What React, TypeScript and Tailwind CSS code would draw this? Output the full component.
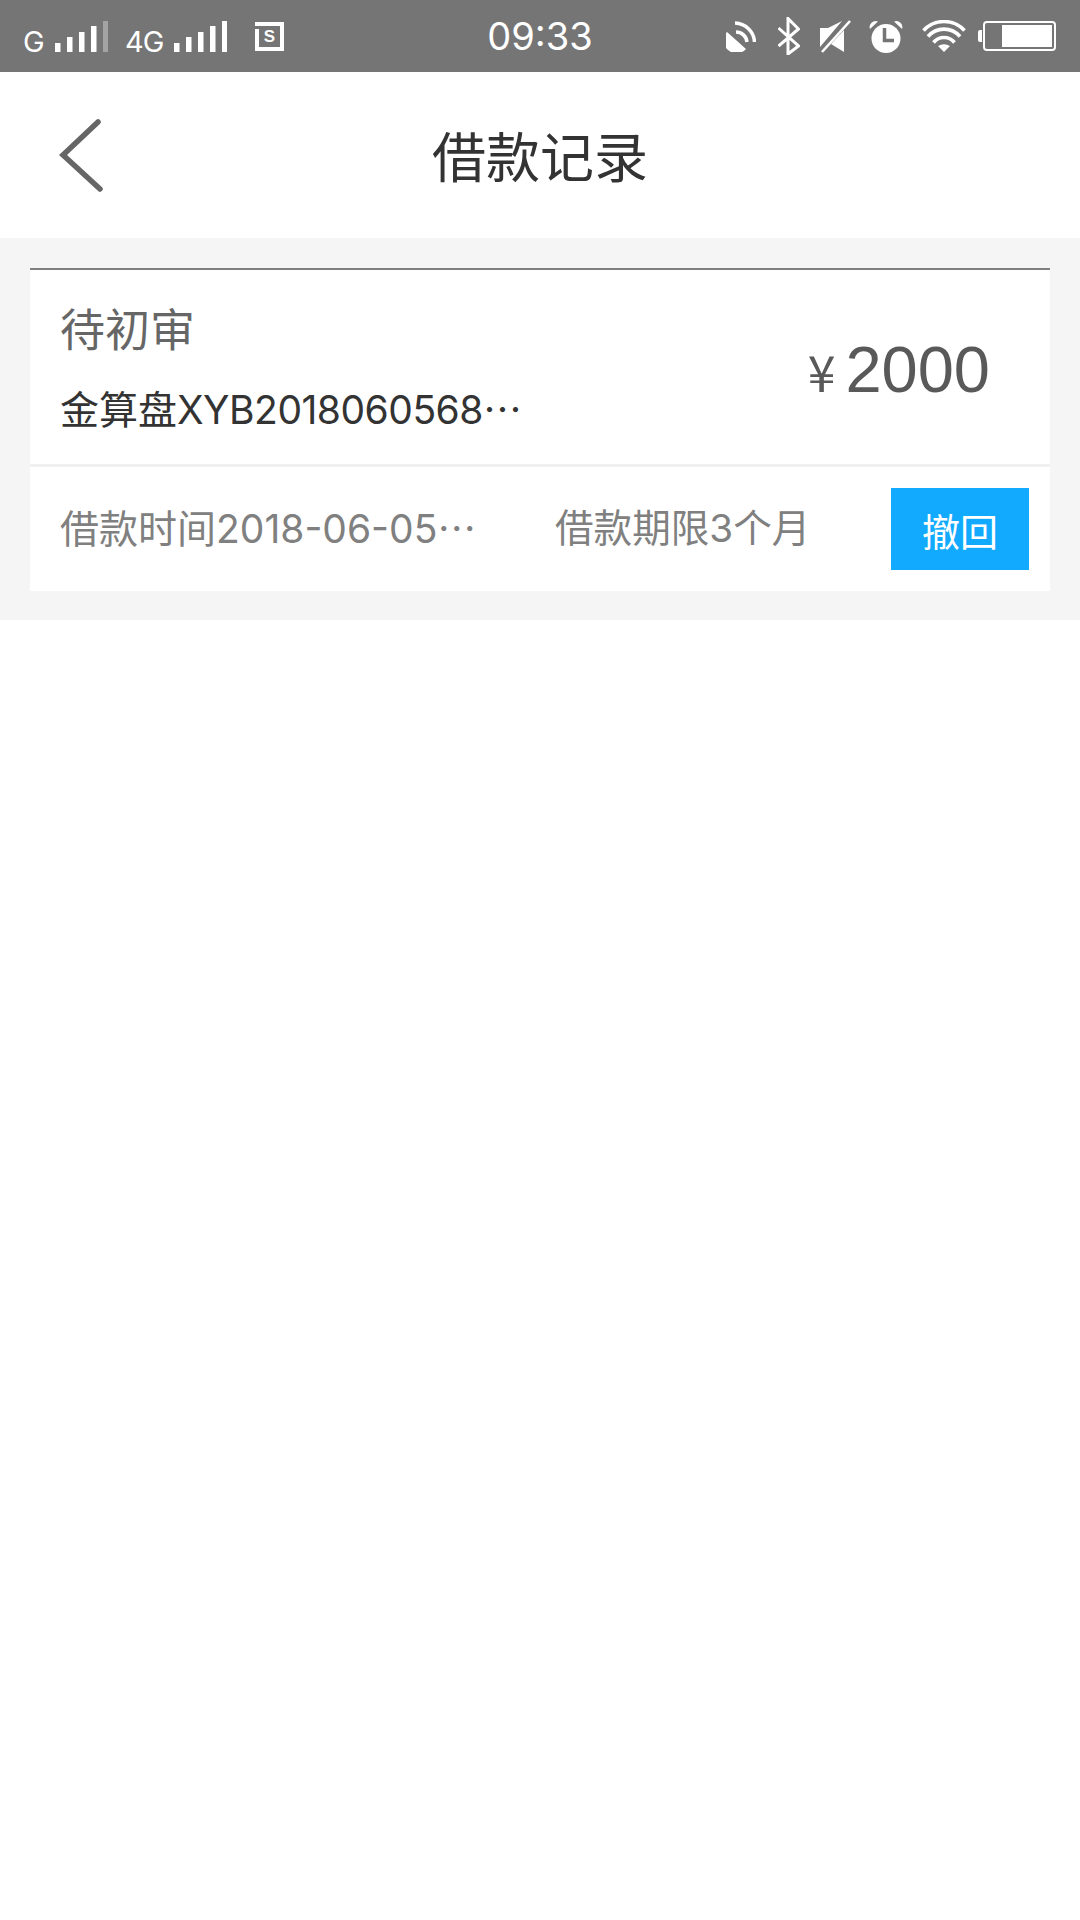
import React from 'react';

const cjk = "font-['Noto_Sans_CJK_SC',sans-serif]";
const latin = "font-['Liberation_Sans','Noto_Sans_CJK_SC',sans-serif]";
const inter = "font-['Inter','Noto_Sans_CJK_SC',sans-serif]";

function SignalBars({ dimLast }: { dimLast?: boolean }) {
    const tops = [22, 16, 11, 5, 0];
    return (
        <svg width="53" height="31" viewBox="0 0 53 31" className="block">
            {tops.map((top, i) => (
                <rect
                    key={i}
                    x={i * 12}
                    y={top}
                    width="5.5"
                    height={31 - top}
                    fill={dimLast && i === 4 ? '#a3a3a3' : '#ffffff'}
                />
            ))}
        </svg>
    );
}

function StatusIcons() {
    return (
        <div className="flex items-center">
            {/* satellite dish */}
            <svg width="30" height="32" viewBox="0 0 30 32" className="block">
                <path d="M1 12 L20 29 A12.7 12.7 0 0 1 1 12 Z" fill="#fff" />
                <path d="M10 12 A11 11 0 0 1 21 22" fill="none" stroke="#fff" strokeWidth="3.5" />
                <path d="M9 3 A20 20 0 0 1 28.5 22" fill="none" stroke="#fff" strokeWidth="3.5" />
            </svg>
            {/* bluetooth */}
            <svg width="22" height="38" viewBox="0 0 22 38" className="block ml-[22px]">
                <path d="M0.5 11 L20.5 29 L10 37 V1.5 L20.5 12 L0.5 29" fill="none" stroke="#fff" strokeWidth="3" />
            </svg>
            {/* muted speaker */}
            <svg width="31" height="33" viewBox="0 0 31 33" className="block ml-[20px]">
                <path d="M0 8 H8 L22 1 L0 27 Z" fill="#fff" />
                <path d="M24 10 V32 L11 24 Z" fill="#fff" />
                <path d="M2 32 L30 1" fill="none" stroke="#fff" strokeWidth="2.6" />
            </svg>
            {/* alarm clock */}
            <svg width="34" height="33" viewBox="0 0 34 33" className="block ml-[18px]">
                <circle cx="17" cy="18.5" r="14.5" fill="#fff" />
                <path d="M1 9 A6 6 0 0 1 9 1.5 Z" fill="#fff" />
                <path d="M33 9 A6 6 0 0 0 25 1.5 Z" fill="#fff" />
                <path d="M15.5 8 V20.5 H25" fill="none" stroke="#757575" strokeWidth="3.5" />
            </svg>
            {/* wifi */}
            <svg width="44" height="32" viewBox="0 0 44 32" className="block ml-[19px]">
                <path d="M1.5 10.5 A28 28 0 0 1 42.5 10.5" fill="none" stroke="#fff" strokeWidth="3.6" />
                <path d="M6 16.5 A21 21 0 0 1 38 16.5" fill="none" stroke="#fff" strokeWidth="3.6" />
                <path d="M11.5 22.5 A13.5 13.5 0 0 1 32.5 22.5" fill="none" stroke="#fff" strokeWidth="3.6" />
                <path d="M16 26 Q22 22.5 28 26 L22 32 Z" fill="#fff" />
            </svg>
            {/* battery */}
            <div className="flex items-center ml-[12px]">
                <div className="w-[4px] h-[12px] bg-white rounded-l-[2px]" />
                <div className="flex justify-end w-[73px] h-[30px] border-2 border-white rounded-[4px] p-[2px] ml-[1px]">
                    <div className="w-[50px] h-full bg-white" />
                </div>
            </div>
        </div>
    );
}

function StatusBar() {
    return (
        <div className={`relative flex items-center justify-between h-[72px] pl-[23px] pr-[24px] bg-[#757575] text-white ${latin}`}>
            <div className="flex items-end h-[31px] mt-[1px]">
                <span className={`w-[22px] text-[29px] leading-[21px] ${inter}`}>G</span>
                <div className="ml-[10px]">
                    <SignalBars dimLast />
                </div>
                <span className={`w-[38px] ml-[17px] text-[29px] leading-[21px] tracking-[-1px] ${inter}`}>4G</span>
                <div className="ml-[11px]">
                    <SignalBars />
                </div>
                {/* sim card */}
                <div className="relative flex items-center justify-center w-[29px] h-[29px] ml-[28px] mb-[1px] border-[4px] border-white">
                    <div className="absolute -left-[4px] top-0 w-[4px] h-[3px] bg-[#757575]" />
                    <span className="text-[17px] leading-none font-bold">S</span>
                </div>
            </div>
            <span className={`absolute left-0 right-0 text-center text-[38px] leading-none ${inter}`}>09:33</span>
            <StatusIcons />
        </div>
    );
}

function Header() {
    return (
        <div className="relative flex items-center justify-center h-[166px] bg-white">
            <svg width="46" height="74" viewBox="0 0 46 74" className="absolute left-[59px] top-[47px]">
                <path d="M39 3 L4 36 L41 70" fill="none" stroke="#666666" strokeWidth="5.5" strokeLinecap="round" />
            </svg>
            <h1 className={`text-[54px] leading-none font-normal text-[#333333] ${cjk}`}>借款记录</h1>
        </div>
    );
}

function LoanCard() {
    return (
        <div className="bg-white border-t-2 border-[#808080]">
            <div className="flex items-center justify-between h-[194px] pl-[30px] pr-[60px]">
                <div>
                    <div className={`text-[45px] leading-[56px] text-[#666666] ${cjk}`}>待初审</div>
                    <div className={`mt-[26px] text-[39px] leading-[50px] text-[#333333] whitespace-nowrap ${inter}`}>
                        金算盘<span className="tracking-[-0.5px]">XYB2018060568</span>
                        <span lang="zh-CN" className={`inline-block ${cjk}`}>⋯</span>
                    </div>
                </div>
                <div className="flex items-baseline mt-[5px] text-[#595959]">
                    <span className={`text-[50px] leading-none ${cjk}`}>¥</span>
                    <span className={`ml-[10px] text-[65px] leading-none ${latin}`}>2000</span>
                </div>
            </div>
            <div className="h-[3px] bg-[#f0f0f0]" />
            <div className={`flex items-center h-[124px] pl-[30px] pr-[21px] text-[39px] text-[#808080] whitespace-nowrap ${inter}`}>
                <span className="w-[495px]">借款时间2018-06-05⋯</span>
                <span className="text-[38.6px]">借款期限3个月</span>
                <button className={`flex items-center justify-center ml-auto w-[138px] h-[82px] bg-[#11aaff] text-white text-[38px] ${cjk}`}>
                    撤回
                </button>
            </div>
        </div>
    );
}

export default function App() {
    return (
        <div className="flex flex-col w-[1080px] h-[1920px] bg-white overflow-hidden">
            <StatusBar />
            <Header />
            <div className="px-[30px] pt-[30px] pb-[29px] bg-[#f5f5f5]">
                <LoanCard />
            </div>
        </div>
    );
}
